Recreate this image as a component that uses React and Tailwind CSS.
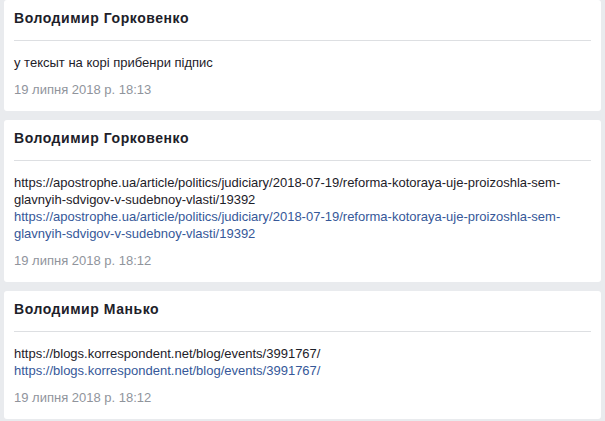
const comments = [
  {
    id: 1,
    author: 'Володимир Горковенко',
    lines: ['у тексыт на корі прибенри підпис'],
    link: null,
    date: '19 липня 2018 р. 18:13',
  },
  {
    id: 2,
    author: 'Володимир Горковенко',
    lines: [
      'https://apostrophe.ua/article/politics/judiciary/2018-07-19/reforma-kotoraya-uje-proizoshla-sem-',
      'glavnyih-sdvigov-v-sudebnoy-vlasti/19392',
    ],
    link: [
      'https://apostrophe.ua/article/politics/judiciary/2018-07-19/reforma-kotoraya-uje-proizoshla-sem-',
      'glavnyih-sdvigov-v-sudebnoy-vlasti/19392',
    ],
    date: '19 липня 2018 р. 18:12',
  },
  {
    id: 3,
    author: 'Володимир Манько',
    lines: ['https://blogs.korrespondent.net/blog/events/3991767/'],
    link: ['https://blogs.korrespondent.net/blog/events/3991767/'],
    date: '19 липня 2018 р. 18:12',
  },
]

const Comment = ({ item }) => (
  <div className="bg-white rounded-[3px] px-[10px] pt-[9px] pb-[13px]">
    <div className="pb-[13px] border-b border-[#dddfe2]">
      <h3 className="text-[14px] leading-[18px] font-bold tracking-[0.55px] text-[#1d2129]">{item.author}</h3>
    </div>
    <div className="mt-[13px] text-[13px] leading-[17px] whitespace-nowrap">
      <p className="text-[#1d2129]">
        {item.lines.map((l, i) => (
          <span key={i}>
            {l}
            {i < item.lines.length - 1 && <br />}
          </span>
        ))}
      </p>
      {item.link && (
        <a href="#" className="block text-[#365899]">
          {item.link.map((l, i) => (
            <span key={i}>
              {l}
              {i < item.link.length - 1 && <br />}
            </span>
          ))}
        </a>
      )}
    </div>
    <div className="mt-[10px] text-[13px] leading-[17px] text-[#90949c]">{item.date}</div>
  </div>
)

export default function App() {
  return (
    <div
      className="min-h-screen bg-[#e9ebee] pl-[4px] pr-[4px] flex flex-col gap-[9px]"
      style={{ fontFamily: '"Liberation Sans", Arial, sans-serif' }}
    >
      {comments.map((c) => (
        <Comment key={c.id} item={c} />
      ))}
    </div>
  )
}
